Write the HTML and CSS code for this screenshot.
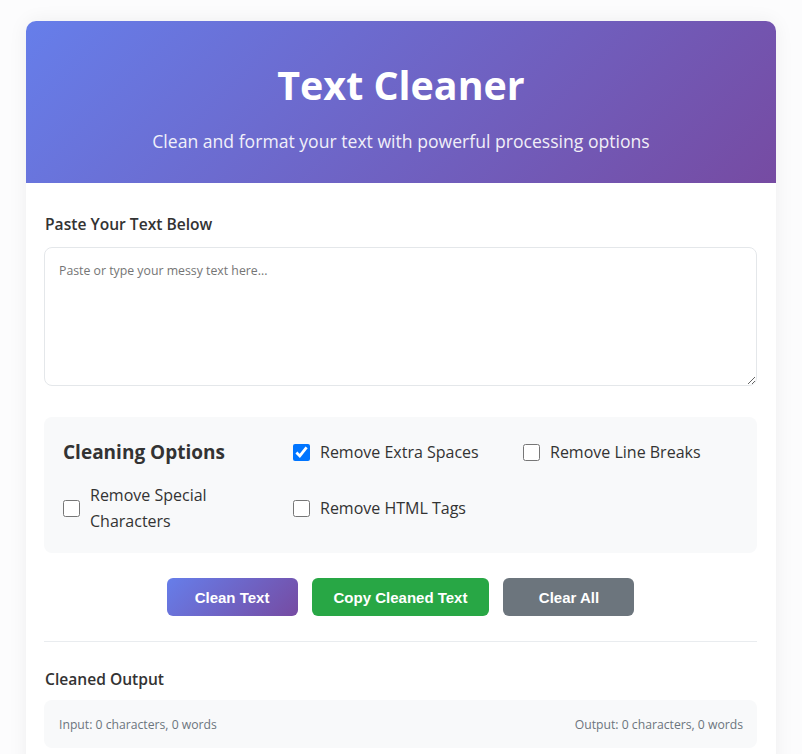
FILE: index.html
```html
<!DOCTYPE html>
<html lang="en">
<head>
<meta charset="utf-8">
<title>Text Cleaner</title>
<link rel="stylesheet" href="styles.css">
</head>
<body>
<div class="container">
  <header class="header">
    <h1 class="title">Text Cleaner</h1>
    <p class="subtitle">Clean and format your text with powerful processing options</p>
  </header>
  <main class="content">
    <label class="section-label" for="input">Paste Your Text Below</label>
    <textarea id="input" class="text-input" placeholder="Paste or type your messy text here..."></textarea>

    <section class="options">
      <h3 class="options-title">Cleaning Options</h3>
      <label class="option"><input type="checkbox" class="check" checked><span>Remove Extra Spaces</span></label>
      <label class="option"><input type="checkbox" class="check"><span>Remove Line Breaks</span></label>
      <label class="option"><input type="checkbox" class="check"><span>Remove Special Characters</span></label>
      <label class="option"><input type="checkbox" class="check"><span>Remove HTML Tags</span></label>
    </section>

    <div class="actions">
      <button class="btn btn-primary">Clean Text</button>
      <button class="btn btn-success">Copy Cleaned Text</button>
      <button class="btn btn-secondary">Clear All</button>
    </div>

    <div class="output-section">
      <div class="section-label">Cleaned Output</div>
      <div class="stats">
        <span>Input: 0 characters, 0 words</span>
        <span>Output: 0 characters, 0 words</span>
      </div>
    </div>
  </main>
</div>
</body>
</html>
```
FILE: styles.css
```css
* { box-sizing: border-box; }

html, body {
  margin: 0;
  padding: 0;
}

body {
  background: #fcfcfd;
  font-family: "Open Sans", "Noto Sans", sans-serif;
  color: #333;
  padding-top: 21px;
}

.container {
  max-width: 750px;
  margin: 0 auto;
  background: #fff;
  border-radius: 10px;
  box-shadow: 0 0 20px rgba(0, 0, 0, 0.06);
  overflow: hidden;
}

.header {
  background: linear-gradient(135deg, #667eea 0%, #764ba2 100%);
  color: #fff;
  text-align: center;
  padding: 40px 20px 29px;
}

.title {
  margin: 0 0 19px;
  font-size: 39.4px;
  line-height: 48px;
  font-weight: 700;
}

.subtitle {
  margin: 0;
  font-size: 17.6px;
  line-height: 26px;
  opacity: 0.9;
}

.content {
  padding: 29px 19px 30px 18px;
}

.section-label {
  display: block;
  font-size: 15.6px;
  line-height: 24px;
  font-weight: 600;
  color: #333;
  margin-bottom: 11px;
  padding-left: 1px;
}

.text-input {
  display: block;
  width: 100%;
  height: 139px;
  border: 1px solid #e4e7ea;
  border-radius: 8px;
  padding: 13px 14px;
  font-family: inherit;
  font-size: 12.3px;
  line-height: 19px;
  color: #333;
  resize: vertical;
  outline: none;
}

.text-input::placeholder { color: #757575; }

.options {
  margin-top: 31px;
  background: #f8f9fa;
  border-radius: 8px;
  padding: 20px 19px 19px;
  display: grid;
  grid-template-columns: repeat(3, 1fr);
  gap: 15px;
  align-items: center;
}

.options-title {
  margin: 0;
  font-size: 19px;
  line-height: 30px;
  font-weight: 700;
  color: #333;
}

.option {
  display: flex;
  align-items: center;
  gap: 10px;
  font-size: 16px;
  line-height: 26px;
  color: #333;
  cursor: pointer;
}

.check {
  flex: none;
  width: 17px;
  height: 17px;
  margin: 0;
  accent-color: #0075ff;
}

.actions {
  margin-top: 25px;
  display: flex;
  justify-content: center;
  gap: 14px;
}

.btn {
  height: 38px;
  min-width: 131px;
  padding: 0 22px;
  border: none;
  border-radius: 6px;
  color: #fff;
  font-family: "Liberation Sans", Arial, sans-serif;
  font-size: 15px;
  font-weight: 700;
  cursor: pointer;
}

.btn-primary { background: linear-gradient(135deg, #667eea 0%, #764ba2 100%); }
.btn-success { background: #28a745; }
.btn-secondary { background: #6c757d; }

.output-section {
  margin-top: 25px;
  border-top: 1px solid #e9ecef;
  padding-top: 25px;
}

.output-section .section-label { margin-bottom: 9px; }

.stats {
  display: flex;
  justify-content: space-between;
  align-items: center;
  height: 48px;
  padding: 0 14px 0 15px;
  background: #f8f9fa;
  border-radius: 8px;
  font-size: 12.2px;
  color: #6c757d;
}
```
